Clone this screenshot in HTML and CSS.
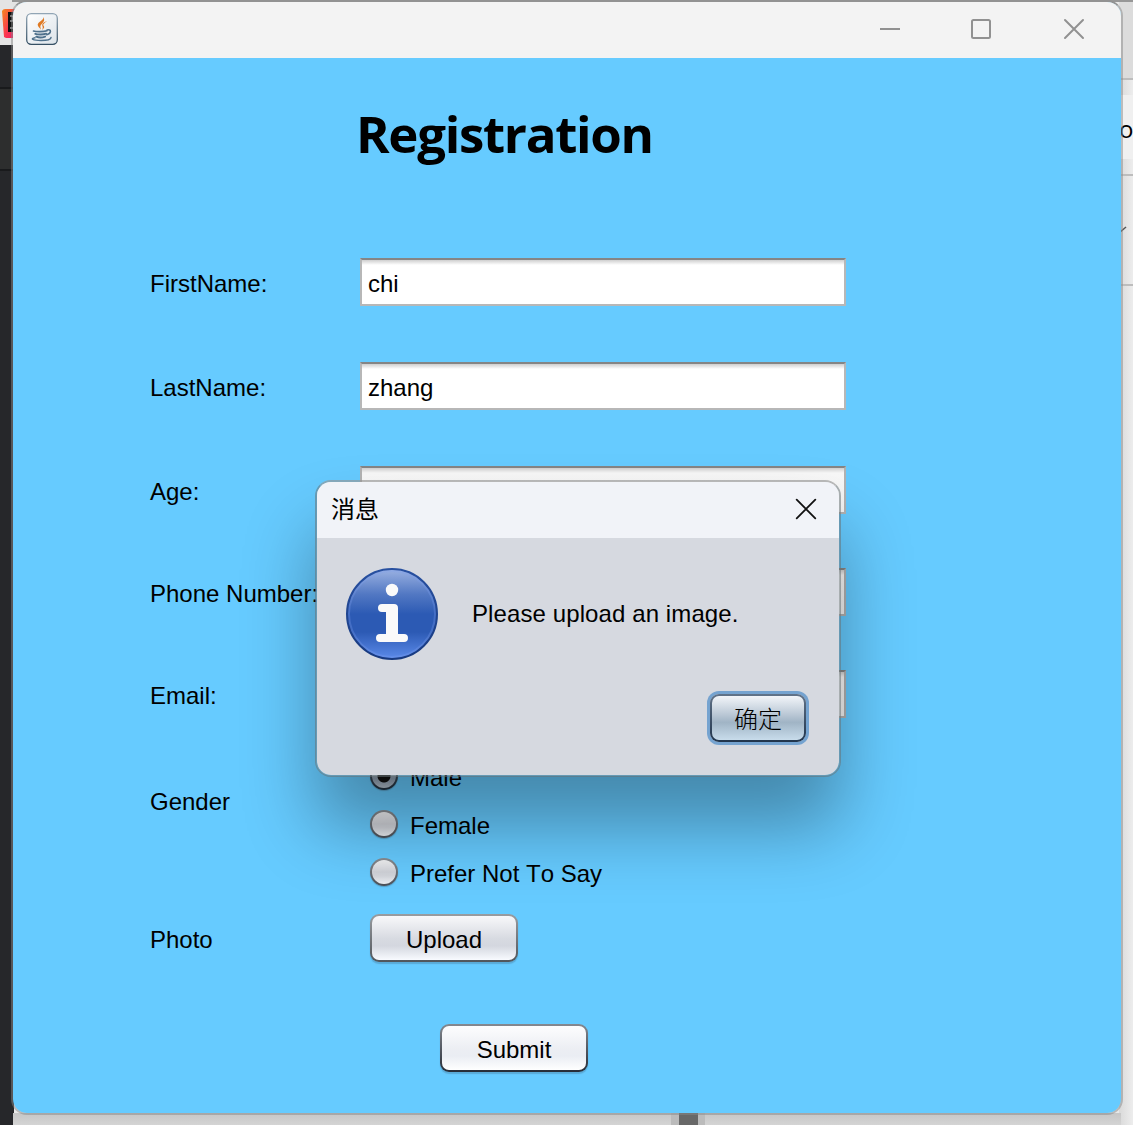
FILE: index.html
```html
<!DOCTYPE html>
<html lang="en">
<head>
<meta charset="utf-8">
<title>Registration</title>
<link rel="stylesheet" href="styles.css">
</head>
<body>
<div class="desktop">
  <svg class="backdrop" width="1133" height="1125" aria-hidden="true">
    <defs>
      <linearGradient id="ide" x1="0" y1="0" x2="1" y2="1"><stop offset="0" stop-color="#f58a1f"/><stop offset=".55" stop-color="#fb3a4e"/><stop offset="1" stop-color="#f0146b"/></linearGradient>
      <linearGradient id="under" x1="0" x2="0" y1="0" y2="1"><stop offset="0" stop-color="#c6c6c6"/><stop offset="1" stop-color="#d4d4d4"/></linearGradient>
      <linearGradient id="side"><stop offset="0" stop-color="#d9d9d9"/><stop offset="1" stop-color="#ededed"/></linearGradient>
    </defs>
    <rect width="1133" height="1125" fill="#e9e9e9"/>
    <rect width="14" height="1125" fill="#26272a"/>
    <rect width="40" height="45" fill="#e4e4e4"/>
    <path d="M2 11Q3 9 5 9H16V38H6L4 37Z" fill="url(#ide)"/>
    <rect x="8" y="12" width="10" height="20" fill="#111"/>
    <path d="M10 16h3v5M10 21h4M10 28h4" stroke="#ddd" fill="none"/>
    <rect y="87" width="14" height="83" fill="#2d2e2e"/>
    <rect y="87" width="14" height="2" fill="#191a1c"/>
    <rect y="169" width="14" height="2" fill="#191a1c"/>
    <rect x="1119" width="14" height="79" fill="#dcdcdc"/>
    <rect x="1119" y="79" width="14" height="1046" fill="url(#side)"/>
    <rect x="1119" y="95" width="14" height="64" fill="#f0f0f0"/>
    <path d="M1119 79h14M1119 175h14M1119 285h14" stroke="#bdbdbd" stroke-width="2"/>
    <rect x="13" y="1113" width="1108" height="12" fill="url(#under)"/>
    <rect x="671" y="1113" width="34" height="12" fill="#bbb"/>
    <rect x="679" y="1113" width="19" height="12" fill="#686868"/>
    <rect x="12" y="0" width="1121" height="2" fill="#979797"/>
    <path d="M1119 233L1126 227" stroke="#555" stroke-width="1.5"/>
  </svg>
  <span class="behind-text">o</span>

  <main class="window">
    <header class="titlebar">
      <svg class="java" width="32" height="32" viewBox="0 0 32 32">
        <defs>
          <linearGradient id="jb" x1="0" x2="0" y1="0" y2="1"><stop offset="0" stop-color="#91a5b5"/><stop offset="1" stop-color="#365064"/></linearGradient>
          <linearGradient id="jf" x1="0" x2="1" y1="0" y2="1"><stop offset="0" stop-color="#fff"/><stop offset="1" stop-color="#dce3e9"/></linearGradient>
        </defs>
        <rect x=".7" y=".7" width="30.6" height="30.6" rx="4.5" fill="url(#jf)" stroke="url(#jb)" stroke-width="1.3"/>
        <path d="M17 3.700c2.200 3.200-6.300 5.200-5.200 8.600.5 1.600 2 2.900 3.200 4.400-.3-2.300-1.400-3.300.3-5.200 1.900-2.100 4.300-4.200 1.700-7.800z" fill="#e07a24"/>
        <path d="M21 7.900c-3.500 1.200-5.400 2.800-4.700 4.900.4 1.200 1 2.100-.3 4 2.800-1.500 2.400-2.900 1.500-4.200-.9-1.500 1.200-2.900 3.500-4.700z" fill="#e07a24"/>
        <g fill="none" stroke="#4f718c" stroke-linecap="round">
          <path d="M7.500 18c2.500.9 10 .9 13.500-.2" stroke-width="1.600"/>
          <path d="M9.300 20.800c2.500 1 8 1 10.800-.1M10.300 23.700c2.500 1 6.200.9 8.800-.1" stroke-width="1.900"/>
          <path d="M21 17c4.800-1.200 4.500 3.200-.3 4.800" stroke-width="1.500"/>
          <path d="M9 24.800c-5 .8-2.500 2.700 6 2.700 7 0 9.800-1.500 10-2.900" stroke-width="1.500"/>
        </g>
      </svg>
      <svg class="controls" width="208" height="24" viewBox="0 0 208 24" fill="none" stroke="#919191" stroke-width="2">
        <path d="M1 12h20"/><rect x="93" y="3" width="18" height="18" rx="1.500"/><path d="M186 3l18 18M204 3l-18 18" stroke-linecap="round"/>
      </svg>
    </header>
    <form class="form">
      <h1 class="heading">Registration</h1>
      <div class="row"><label class="label">FirstName:</label><div class="field">chi</div></div>
      <div class="row"><label class="label">LastName:</label><div class="field">zhang</div></div>
      <div class="row row-short"><label class="label">Age:</label><div class="field field-off"></div></div>
      <div class="row row-short"><label class="label">Phone Number:</label><div class="field field-off"></div></div>
      <div class="row row-last"><label class="label">Email:</label><div class="field field-off"></div></div>
      <div class="row row-gender">
        <span class="label label-gender">Gender</span>
        <div class="options">
          <span class="option"><i class="radio radio-on"></i>Male</span>
          <span class="option"><i class="radio"></i>Female</span>
          <span class="option"><i class="radio"></i>Prefer Not To Say</span>
        </div>
      </div>
      <div class="row row-photo"><span class="label">Photo</span><button type="button" class="button upload">Upload</button></div>
      <button type="button" class="button submit">Submit</button>
    </form>
  </main>

  <section class="dialog">
    <header class="dialog-title">
      <span class="dialog-name" lang="zh">消息</span>
      <svg width="22" height="22" viewBox="0 0 22 22" fill="none" stroke="#111" stroke-width="1.800" stroke-linecap="round"><path d="M1.700 1.700l18.600 18.600M20.300 1.700l-18.600 18.600"/></svg>
    </header>
    <div class="message">
      <svg width="92" height="92" viewBox="0 0 92 92">
        <defs>
          <linearGradient id="info" x1="0" x2="0" y1="0" y2="1"><stop offset="0" stop-color="#9bb2e2"/><stop offset=".28" stop-color="#5278c3"/><stop offset=".5" stop-color="#2c5ab4"/><stop offset=".7" stop-color="#2c5ab4"/><stop offset="1" stop-color="#5c8bea"/></linearGradient>
          <linearGradient id="ring" x1="0" x2="0" y1="0" y2="1"><stop offset="0" stop-color="#2850a0"/><stop offset="1" stop-color="#183a80"/></linearGradient>
        </defs>
        <circle cx="46" cy="46" r="45" fill="url(#info)" stroke="url(#ring)" stroke-width="2"/>
        <circle cx="46" cy="46" r="43" fill="none" stroke="#7da0ee" stroke-opacity=".3" stroke-width="2"/>
        <circle cx="46" cy="22" r="6.200" fill="#fafafa"/>
        <path d="M36 36H48Q52 36 52 40V66H58Q62 66 62 70T58 74H34Q30 74 30 70T34 66H40V44H36Q32 44 32 40T36 36Z" fill="#fafafa"/>
      </svg>
      <span class="message-text">Please upload an image.</span>
    </div>
    <div class="actions"><button type="button" class="confirm" lang="zh">确定</button></div>
  </section>
</div>
</body>
</html>
```
FILE: styles.css
```css
* { box-sizing: border-box; }
body {
  margin: 0;
  overflow: hidden;
  font: 24px/48px "Liberation Sans", "Noto Sans CJK SC", sans-serif;
  font-kerning: none;
  color: #000;
}
.desktop { position: relative; width: 1133px; height: 1125px; overflow: hidden; }
.backdrop { position: absolute; inset: 0; }
.behind-text { position: absolute; left: 1119px; top: 105px; font-family: "Open Sans", sans-serif; }
.window {
  position: absolute;
  left: 11px;
  top: 0;
  width: 1112px;
  height: 1115px;
  border: 2px solid rgba(135, 135, 135, .5);
  border-top-color: #929292;
  border-radius: 16px;
  background: #66cbff;
  background-clip: padding-box;
  overflow: hidden;
}
.titlebar {
  height: 56px;
  padding: 0 34px 2px 13px;
  display: flex;
  align-items: center;
  justify-content: space-between;
  background: #f3f3f3;
}
.form { display: flex; flex-direction: column; padding-left: 137px; }
.heading {
  margin: 39px 0 125px 206px;
  height: 36px;
  font: 700 51px/72px "Open Sans", sans-serif;
  letter-spacing: -1.3px;
}
.row { display: flex; height: 48px; margin-bottom: 56px; }
.row-short { margin-bottom: 54px; }
.row-last { margin-bottom: 35px; }
.row-gender { height: 144px; margin-bottom: 17px; }
.row-photo { margin-bottom: 62px; }
.label { width: 210px; padding-top: 2px; white-space: nowrap; }
.label-gender { padding-top: 25px; }
.field {
  width: 486px;
  height: 48px;
  padding: 0 6px;
  border: 2px solid #b7b7b7;
  border-top-color: #858585;
  background: linear-gradient(#cfcfcf, #fff 5px);
}
.field-off {
  border-color: #b2b2b2;
  border-top-color: #858585;
  background: linear-gradient(#d0d0d0, #f8f8f8 5px, #f4f4f4);
}
.options { padding-left: 10px; }
.option { display: flex; height: 48px; align-items: center; padding-top: 1px; }
.radio {
  width: 28px;
  height: 28px;
  margin: -3px 12px 0 0;
  border: 2px solid transparent;
  border-radius: 50%;
  background:
    linear-gradient(#f2f3f5, #d0d2d8 50%, #d3d6dc 65%, #eef0f4) padding-box,
    linear-gradient(#8b8f94, #4b5058) border-box;
  box-shadow: 0 1px 1px rgba(60, 80, 95, .35);
}
.radio-on {
  background:
    radial-gradient(circle, #111 0 6px, transparent 7px) padding-box,
    linear-gradient(#c8d7e4, #8e9fb1 60%, #b8c5d2) padding-box,
    linear-gradient(#55616d, #20303f) border-box;
}
.button {
  width: 148px;
  height: 48px;
  padding: 3px 0 0;
  border: 2px solid transparent;
  border-radius: 9px;
  background:
    linear-gradient(#f8f8fa, #d7dae1 52%, #d4d7df 68%, #f8faff) padding-box,
    linear-gradient(#999ca0, #50555b) border-box;
  box-shadow: 0 2px 1px rgba(65, 110, 140, .35);
  color: #000;
  font: inherit;
  line-height: 40px;
}
.upload { margin-left: 10px; }
.submit {
  margin-left: 290px;
  background:
    linear-gradient(#fdfdfe, #eceef3 52%, #eaedf3 68%, #fff) padding-box,
    linear-gradient(#858990, #262c37) border-box;
}
.dialog {
  position: absolute;
  left: 315px;
  top: 480px;
  width: 526px;
  height: 297px;
  border: 2px solid rgba(105, 115, 120, .55);
  border-top-color: rgba(150, 150, 150, .65);
  border-radius: 16px;
  background: #d6d9e0;
  background-clip: padding-box;
  box-shadow: 0 50px 72px rgba(0, 0, 0, .33);
}
.dialog-title {
  display: flex;
  align-items: center;
  justify-content: space-between;
  height: 56px;
  padding: 0 22px 2px 14px;
  border-radius: 14px 14px 0 0;
  background: #f1f3f8;
  font-family: "Noto Sans CJK SC", sans-serif;
}
.dialog-name { padding-bottom: 3px; }
.message { display: flex; gap: 34px; align-items: center; padding: 30px 0 0 29px; }
.message-text { letter-spacing: .1px; }
.actions { display: flex; justify-content: flex-end; padding: 34px 33px 0 0; }
.confirm {
  width: 96px;
  height: 48px;
  padding: 0;
  border: 2px solid transparent;
  border-radius: 9px;
  background:
    linear-gradient(#f2f5f9, #bdcad7 40%, #a0b4c5 60%, #c8dceb) padding-box,
    linear-gradient(#617389, #20344c) border-box;
  box-shadow: 0 0 0 3px #75a3d0;
  color: #000;
  font: 300 24px/44px "Noto Sans CJK SC", sans-serif;
}
```
